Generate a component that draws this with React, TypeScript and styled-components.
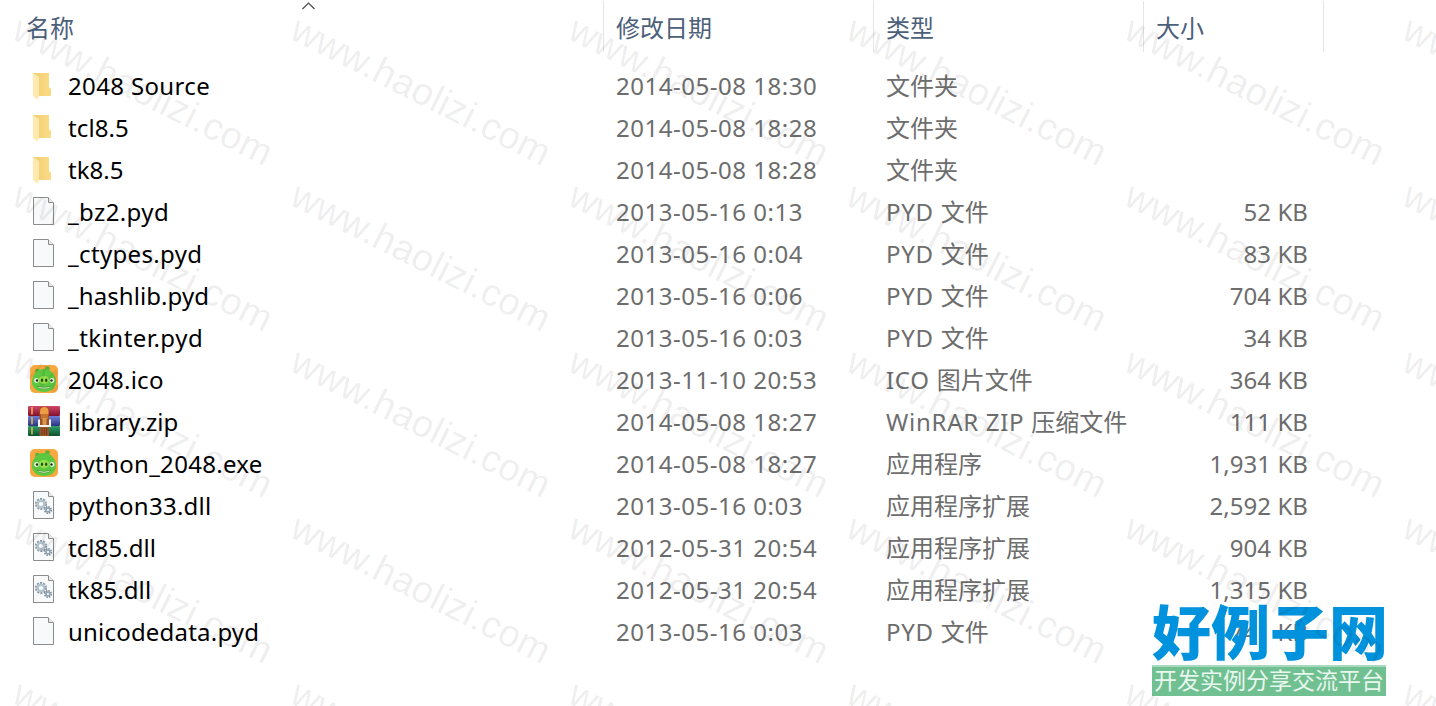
import styled, { createGlobalStyle } from 'styled-components'

const GlobalStyle = createGlobalStyle`
    *{
        box-sizing: border-box;
    }
    body{
        margin: 0;
        background: #fff;
        font-family: "Noto Sans", "Noto Sans CJK SC", sans-serif;
        overflow: hidden;
    }
`
const Page = styled.div`
    position: relative;
    width: 1436px;
    height: 706px;
    overflow: hidden;
`
const columns = '604px 270px 270px 180px'

const Header = styled.div`
    display: grid;
    grid-template-columns: ${columns};
    height: 52px;
    margin-bottom: 13px;
`
const HeaderCell = styled.div<{ $left: number }>`
    position: relative;
    display: flex;
    align-items: center;
    height: 51px;
    margin-top: 1px;
    padding: 2px 0 0 ${props => props.$left}px;
    border-right: 1px solid #e4e4e4;
    color: #4c607a;
    font-size: 24px;
    line-height: 36px;
`
const SortArrow = styled.svg`
    position: absolute;
    top: 0;
    left: 301px;
`
const Row = styled.div`
    display: grid;
    grid-template-columns: ${columns};
    height: 42px;
    line-height: 42px;
    font-size: 24px;
    color: #6d6d6d;
    white-space: pre;
`
const NameCell = styled.div`
    display: flex;
    align-items: center;
    padding-left: 27px;
    color: #000;
`
const IconBox = styled.div`
    display: flex;
    flex: none;
    width: 41px;
    height: 42px;
`
const Latin = styled.span<{ $gap: number }>`
    letter-spacing: ${props => props.$gap}px;
`
const Cell = styled.div`
    padding-left: 12px;
`
const SizeCell = styled.div`
    padding-right: 16px;
    text-align: right;
`
const Watermark = styled.div`
    position: absolute;
    inset: 0;
    display: grid;
    grid-template-columns: repeat(6, 278px);
    grid-auto-rows: 166px;
    pointer-events: none;
`
const Mark = styled.span`
    padding: 0 0 0 15px;
    font-family: "Liberation Sans", Arial, sans-serif;
    font-size: 38px;
    letter-spacing: 0.3px;
    line-height: 42px;
    white-space: nowrap;
    color: rgba(0, 0, 0, 0.08);
    transform: translate(-5px, 4px) rotate(26.8deg);
    transform-origin: 15px 34px;
`
const Brand = styled.div`
    position: absolute;
    left: 1152px;
    top: 604px;
    width: 234px;
`
const BrandName = styled.div`
    height: 61px;
    color: #0092dd;
    font-family: "Noto Sans CJK SC", sans-serif;
    font-weight: 900;
    font-size: 59px;
    line-height: 51px;
    white-space: nowrap;
`
const BrandLine = styled.div`
    height: 31px;
    padding-left: 2px;
    background: #70c092;
    border-top: 2px solid #a9d9bd;
    color: #e9f7ef;
    font-family: "Noto Sans CJK SC", sans-serif;
    font-size: 23px;
    line-height: 24px;
    white-space: nowrap;
`

const FolderIcon = () => (
    <svg width='34' height='42' viewBox='0 0 34 42'>
        <defs>
            <linearGradient id='folder' x1='0' x2='1'>
                <stop offset='0' stopColor='#f0cd72' />
                <stop offset='1' stopColor='#fbdc86' />
            </linearGradient>
        </defs>
        <path d='M6 8H22V22L24 24V31H10Z' fill='url(#folder)' />
        <path d='M6 8L12 12V31L10.5 34.5L6 31Z' fill='#ffe9ac' />
    </svg>
)

const Sheet = () => (
    <>
        <path d='M6.5 6.5H21L26.5 12V33.5H6.5Z' fill='#f8f9fa' stroke='#8b8b8b' />
        <path d='M21.5 6.5V11.5H26.5' fill='#e9e9e9' stroke='#8b8b8b' />
    </>
)

const FileIcon = () => (
    <svg width='34' height='42' viewBox='0 0 34 42'>
        <Sheet />
    </svg>
)

const DllIcon = () => (
    <svg width='34' height='42' viewBox='0 0 34 42'>
        <Sheet />
        <circle cx='14' cy='19' r='5' fill='none' stroke='#8697a3' strokeWidth='2' strokeDasharray='2 1.14' />
        <circle cx='14' cy='19' r='3.3' fill='#fff' stroke='#b4c4cf' strokeWidth='2.4' />
        <circle cx='21' cy='25' r='3.2' fill='none' stroke='#788894' strokeWidth='1.6' strokeDasharray='1.5 1' />
        <circle cx='21' cy='25' r='1.9' fill='#fff' stroke='#8fa5b5' strokeWidth='1.6' />
    </svg>
)

const PigIcon = () => (
    <svg width='34' height='42' viewBox='0 0 34 42'>
        <rect x='3' y='6' width='28' height='28' rx='5' fill='#f7a93f' />
        <circle cx='10.5' cy='12' r='2.3' fill='#5fae38' />
        <circle cx='20.5' cy='9.5' r='2.3' fill='#5fae38' />
        <path d='M17 10C24 10 29 16 29 23C29 29 24 33 17 33C10 33 5 29 5 23C5 16 10 10 17 10Z' fill='#5cc840' />
        <circle cx='9.5' cy='21.5' r='2.4' fill='#eef8e4' />
        <circle cx='25' cy='21.5' r='2.4' fill='#eef8e4' />
        <circle cx='10' cy='21.5' r='1.2' fill='#17300c' />
        <circle cx='24.5' cy='21.5' r='1.2' fill='#17300c' />
        <ellipse cx='17' cy='21' rx='5.2' ry='4' fill='#97e04a' />
        <ellipse cx='15' cy='21.2' rx='1.1' ry='1.7' fill='#1b4a12' />
        <ellipse cx='19.2' cy='21.2' rx='1.1' ry='1.7' fill='#1b4a12' />
        <path d='M10 27Q17 30 24 27Q22 30 17 30Q12 30 10 27Z' fill='#f1f8dd' stroke='#2f7a23' strokeWidth='.5' />
    </svg>
)

const ZipIcon = () => (
    <svg width='34' height='42' viewBox='0 0 34 42'>
        <defs>
            <linearGradient id='red' x2='0' y2='1'>
                <stop offset='0' stopColor='#d5476a' />
                <stop offset='1' stopColor='#7e0f2c' />
            </linearGradient>
            <linearGradient id='blue' x2='0' y2='1'>
                <stop offset='0' stopColor='#6f7ed6' />
                <stop offset='1' stopColor='#2a3380' />
            </linearGradient>
            <linearGradient id='green' x2='0' y2='1'>
                <stop offset='0' stopColor='#2fa06a' />
                <stop offset='1' stopColor='#0b4f2e' />
            </linearGradient>
        </defs>
        <rect x='1' y='5' width='32' height='10' rx='1' fill='url(#red)' />
        <rect x='1' y='15' width='32' height='10' rx='1' fill='url(#blue)' />
        <rect x='1' y='25' width='32' height='10' rx='1' fill='url(#green)' />
        <path d='M5 6V13.5M5 16V23.5M5 26V33.5' stroke='#e8b944' strokeWidth='1.5' />
        <rect x='12.5' y='6' width='9.5' height='29' fill='#9a5428' />
        <path d='M13 11Q13 6 17.3 6Q21.5 6 21.5 11V13H13Z' fill='#ef9d42' />
        <path d='M14 13H21V18H14Z' fill='#c9722f' />
        <path d='M12 18.5V25H23V18.5' fill='none' stroke='#f4f4f4' strokeWidth='2' />
        <rect x='15.5' y='17' width='4' height='7' rx='1' fill='#e0954f' />
        <path d='M15 27V34M17.3 27V34M19.6 27V34' stroke='#6e3716' strokeWidth='.8' />
    </svg>
)

const icons = {
    folder: FolderIcon,
    file: FileIcon,
    dll: DllIcon,
    pig: PigIcon,
    zip: ZipIcon
}

type Entry = {
    icon: keyof typeof icons,
    name: string,
    gap?: number,
    date: string,
    latinType?: string,
    type: string,
    size?: string
}

const entries: Entry[] = [
    { icon: 'folder', name: '2048 Source', gap: 0.35, date: '2014-05-08 18:30', type: '文件夹' },
    { icon: 'folder', name: 'tcl8.5', gap: 0.1, date: '2014-05-08 18:28', type: '文件夹' },
    { icon: 'folder', name: 'tk8.5', gap: 0, date: '2014-05-08 18:28', type: '文件夹' },
    { icon: 'file', name: '_bz2.pyd', gap: 0.4, date: '2013-05-16 0:13', latinType: 'PYD ', type: '文件', size: '52 KB' },
    { icon: 'file', name: '_ctypes.pyd', gap: 0.35, date: '2013-05-16 0:04', latinType: 'PYD ', type: '文件', size: '83 KB' },
    { icon: 'file', name: '_hashlib.pyd', gap: 0.08, date: '2013-05-16 0:06', latinType: 'PYD ', type: '文件', size: '704 KB' },
    { icon: 'file', name: '_tkinter.pyd', gap: 0.5, date: '2013-05-16 0:03', latinType: 'PYD ', type: '文件', size: '34 KB' },
    { icon: 'pig', name: '2048.ico', date: '2013-11-10 20:53', latinType: 'ICO ', type: '图片文件', size: '364 KB' },
    { icon: 'zip', name: 'library.zip', gap: 0.04, date: '2014-05-08 18:27', latinType: 'WinRAR ZIP ', type: '压缩文件', size: '111 KB' },
    { icon: 'pig', name: 'python_2048.exe', gap: 0.3, date: '2014-05-08 18:27', type: '应用程序', size: '1,931 KB' },
    { icon: 'dll', name: 'python33.dll', date: '2013-05-16 0:03', type: '应用程序扩展', size: '2,592 KB' },
    { icon: 'dll', name: 'tcl85.dll', gap: 0.08, date: '2012-05-31 20:54', type: '应用程序扩展', size: '904 KB' },
    { icon: 'dll', name: 'tk85.dll', gap: 0.08, date: '2012-05-31 20:54', type: '应用程序扩展', size: '1,315 KB' },
    { icon: 'file', name: 'unicodedata.pyd', gap: 0.2, date: '2013-05-16 0:03', latinType: 'PYD ', type: '文件', size: '741 KB' }
]

const FileRow = ({ icon, name, gap = 0.26, date, latinType, type, size }: Entry) => {
    const Icon = icons[icon]
    return (
        <Row>
            <NameCell>
                <IconBox><Icon /></IconBox>
                <Latin $gap={gap}>{name}</Latin>
            </NameCell>
            <Cell><Latin $gap={0.52}>{date}</Latin></Cell>
            <Cell>
                {latinType && <Latin $gap={0.72}>{latinType}</Latin>}
                {type}
            </Cell>
            <SizeCell>{size && <Latin $gap={0.05}>{size}</Latin>}</SizeCell>
        </Row>
    )
}

const App = () => {
    return (
        <>
            <GlobalStyle />
            <Page>
                <Header>
                    <HeaderCell $left={26}>
                        名称
                        <SortArrow width='14' height='9' viewBox='0 0 14 9'>
                            <path d='M1.5 8L7.5 2L13.5 8' fill='none' stroke='#4a4a4a' strokeWidth='1.2' />
                        </SortArrow>
                    </HeaderCell>
                    <HeaderCell $left={12}>修改日期</HeaderCell>
                    <HeaderCell $left={12}>类型</HeaderCell>
                    <HeaderCell $left={12}>大小</HeaderCell>
                </Header>
                {entries.map(entry => <FileRow key={entry.name} {...entry} />)}
                <Brand>
                    <BrandName>好例子网</BrandName>
                    <BrandLine>开发实例分享交流平台</BrandLine>
                </Brand>
                <Watermark>
                    {Array.from({ length: 30 }, (_, i) => <Mark key={i}>www.haolizi.com</Mark>)}
                </Watermark>
            </Page>
        </>
    )
}

export default App
